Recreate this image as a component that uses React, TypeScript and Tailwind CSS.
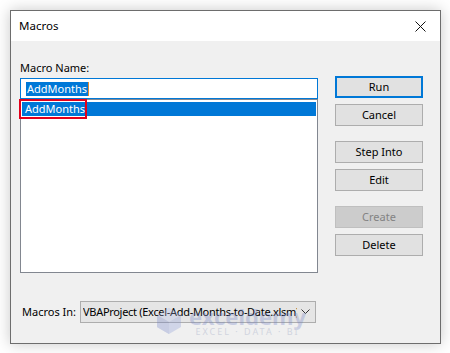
import React from 'react'

const font = "font-['Segoe_UI','Noto_Sans',sans-serif]"

const Btn = ({ label, primary, disabled }: { label: string; primary?: boolean; disabled?: boolean }) => (
  <div
    className={
      'h-[22px] w-[88px] flex items-center justify-center text-[11px] ' +
      (primary
        ? 'border-2 border-[#0078d7] bg-[#e1e1e1] text-black'
        : disabled
          ? 'border border-[#bfbfbf] bg-[#cccccc] text-[#838383]'
          : 'border border-[#adadad] bg-[#e1e1e1] text-black')
    }
  >
    {label}
  </div>
)

export default function App() {
  return (
    <div className={`w-[450px] h-[353px] bg-white pt-[10px] pl-[10px] ${font}`}>
      <div className="relative w-[431px] h-[334px] border border-[#6d6d6d] bg-[#f0f0f0] shadow-[0_0_14px_rgba(0,0,0,0.22)] flex flex-col">
        {/* title bar */}
        <div className="h-[30px] bg-white flex items-center justify-between pl-[8px] pr-[10px]">
          <span className="text-[11.5px] text-black">Macros</span>
          <svg width="11" height="11" viewBox="0 0 11 11" className="mr-[4px]">
            <path d="M0.5 0.5L10.5 10.5M10.5 0.5L0.5 10.5" stroke="#111" strokeWidth="1" />
          </svg>
        </div>

        {/* body */}
        <div className="flex pl-[9px]">
          <div className="flex flex-col w-[298px]">
            <div className="mt-[19px] h-[16px] leading-[16px] text-[11px] text-black">Macro Name:</div>
            <div className="mt-[2px] h-[21px] border border-[#0078d7] bg-white flex items-center pl-[5px]">
              <span className="bg-[#0078d7] text-white text-[11px] leading-[14px] px-px">AddMonths</span>
              <span className="w-px h-[14px] bg-[#e08a2e]" />
            </div>
            <div className="relative h-[174px] border border-[#828790] bg-white pt-[2px] px-px">
              <div className="h-[14px] bg-[#0078d7] text-white text-[11px] leading-[14px] pl-[3px]">AddMonths</div>
              <div className="absolute left-[-2px] top-[-1px] w-[68px] h-[20px] border-2 border-[#e3001b]" />
            </div>
          </div>

          <div className="ml-[17px] mt-[35px] flex flex-col">
            <Btn label="Run" primary />
            <div className="mt-[6px]"><Btn label="Cancel" /></div>
            <div className="mt-[15px]"><Btn label="Step Into" /></div>
            <div className="mt-[6px]"><Btn label="Edit" /></div>
            <div className="mt-[15px]"><Btn label="Create" disabled /></div>
            <div className="mt-[6px]"><Btn label="Delete" /></div>
          </div>
        </div>

        {/* bottom row */}
        <div className="mt-[28px] flex items-center pl-[11px]">
          <span className="text-[11px] text-black w-[58px] whitespace-nowrap">Macros In:</span>
          <div className="w-[236px] h-[22px] border border-[#adadad] bg-[#e5e5e5] flex items-center pl-[2px] pr-[5px]">
            <span className="flex-1 overflow-hidden whitespace-nowrap text-[11px] tracking-[-0.3px] text-black">
              VBAProject (Excel-Add-Months-to-Date.xlsm)
            </span>
            <svg width="9" height="6" viewBox="0 0 9 6" className="ml-[4px]">
              <path d="M0.5 0.5L4.5 4.5L8.5 0.5" stroke="#333" strokeWidth="1" fill="none" />
            </svg>
          </div>
        </div>

        {/* watermark */}
        <div className="absolute left-[144px] top-[294px] flex items-center gap-[6px] opacity-[0.3] pointer-events-none">
          <svg width="28" height="28" viewBox="0 0 28 28">
            <path d="M14 1L26 8V20L14 27L2 20V8Z" fill="#8a9ad6" />
            <path d="M14 1L26 8L14 15L2 8Z" fill="#b7c2ec" />
            <path d="M14 15V27L2 20V8Z" fill="#6f80c6" />
          </svg>
          <div className="flex flex-col items-center">
            <span className="text-[22px] leading-[22px] font-bold text-[#6f80c6] font-['Noto_Sans',sans-serif]">exceldemy</span>
            <span className="text-[9px] leading-[10px] tracking-[2px] text-[#8a94b8] font-['Noto_Sans',sans-serif]">EXCEL · DATA · BI</span>
          </div>
        </div>
      </div>
    </div>
  )
}
